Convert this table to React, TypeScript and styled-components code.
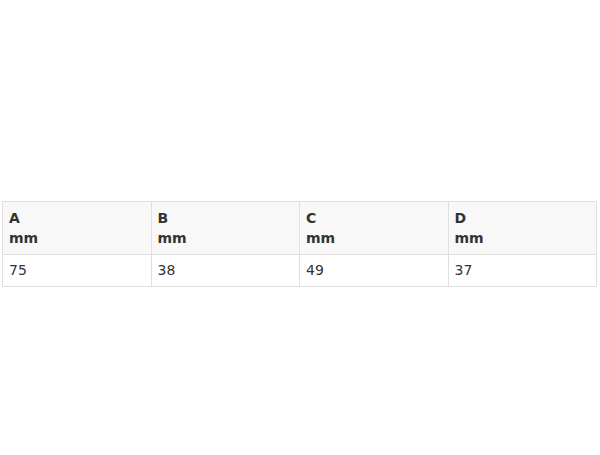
import React from "react";
import styled, { createGlobalStyle } from "styled-components";

const Global = createGlobalStyle`
  html, body { margin: 0; padding: 0; background: #fff; }
  body { font-family: "DejaVu Sans", sans-serif; font-size: 14px; color: #333; }
`;

const Page = styled.div`
  padding: 201px 3px 0 2px;
`;

const Table = styled.table`
  width: 100%;
  border-collapse: collapse;
  table-layout: fixed;
`;

const Th = styled.th`
  background: #f8f8f8;
  border: 1px solid #e0e0e0;
  padding: 6px 6px;
  text-align: left;
  font-weight: bold;
  line-height: 20px;
  vertical-align: top;
`;

const Td = styled.td`
  border: 1px solid #e0e0e0;
  padding: 6px 6px;
  line-height: 19px;
  text-align: left;
`;

const cols = [
  { label: "A", value: "75" },
  { label: "B", value: "38" },
  { label: "C", value: "49" },
  { label: "D", value: "37" },
];

export default function App() {
  return (
    <>
      <Global />
      <Page>
        <Table>
          <thead>
            <tr>
              {cols.map((c) => (
                <Th key={c.label}>
                  {c.label}
                  <br />
                  mm
                </Th>
              ))}
            </tr>
          </thead>
          <tbody>
            <tr>
              {cols.map((c) => (
                <Td key={c.label}>{c.value}</Td>
              ))}
            </tr>
          </tbody>
        </Table>
      </Page>
    </>
  );
}
